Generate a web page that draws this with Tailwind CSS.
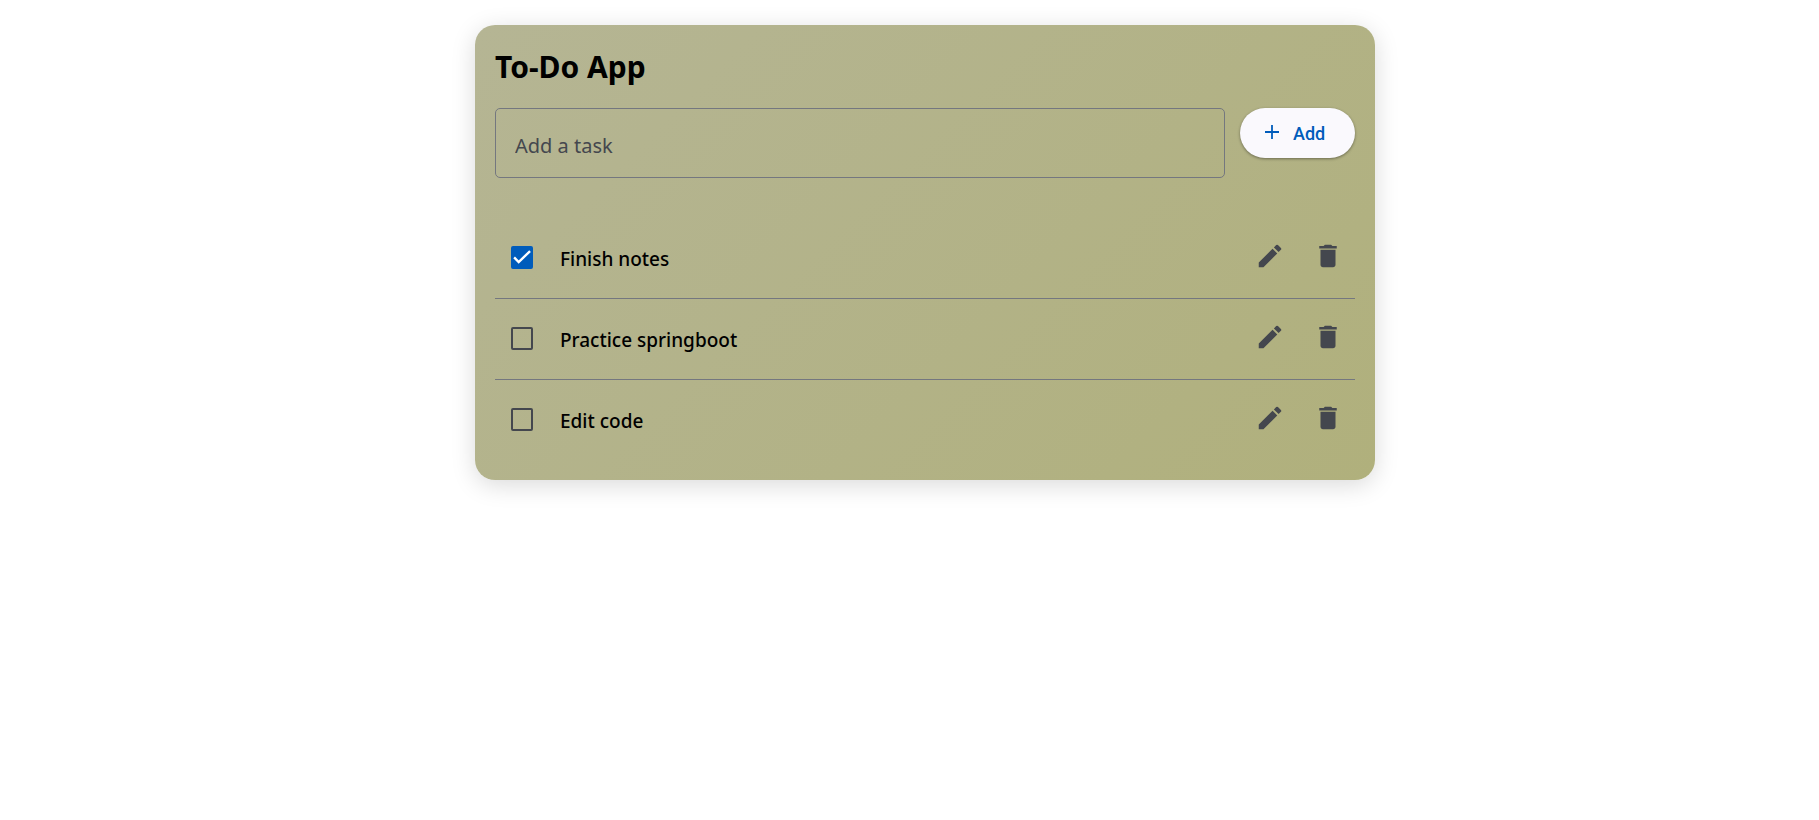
<!DOCTYPE html>
<html lang="en">
<head>
<meta charset="utf-8">
<title>To-Do App</title>
<script src="https://cdn.jsdelivr.net/npm/@tailwindcss/browser@4"></script>
</head>
<body class="min-h-screen bg-white pt-[25px] pl-[31px] font-[family-name:'Segoe_UI','Noto_Sans',sans-serif] text-black">
<main class="mx-auto max-w-[900px] rounded-[20px] bg-linear-135 from-[#b5b594] to-[#b0b07c] p-5 shadow-[0_5px_25px_rgba(0,0,0,0.15)]">
  <h1 class="mb-5 text-[30px]/[43px] font-bold">To-Do App</h1>
  <form class="mb-10 flex items-start gap-[15px]">
    <input type="text" aria-label="Add a task" placeholder="Add a task" class="h-[70px] min-w-0 flex-1 rounded-[5px] border border-[#74777f] bg-transparent px-[19px] pt-1 text-[20px] placeholder:text-[#44474e]">
    <button type="button" class="flex h-[50px] w-[115px] items-center gap-[10px] rounded-full bg-[#faf9fd] pl-[21px] font-[family-name:Roboto,sans-serif] text-[18px] font-medium text-[#005cbb] shadow-[0_1px_3px_rgba(0,0,0,0.4)]">
      <svg class="mb-[2px] size-[22px]" viewBox="0 0 22 22" fill="none" stroke="currentColor" stroke-width="1.8" aria-hidden="true"><path d="M11 4v14M4 11h14"/></svg>Add
    </button>
  </form>
  <ul>
    <li class="flex items-center border-b border-[#74777f] pr-3 pl-4">
      <span class="relative mr-[27px] mb-px h-[23px] w-[22px]">
        <input id="t1" type="checkbox" checked class="peer block h-[23px] w-[22px] appearance-none rounded-[2px] border-2 border-[#44474e] checked:border-[#005cbb] checked:bg-[#005cbb]">
        <svg class="pointer-events-none absolute inset-0 hidden size-[22px] peer-checked:block" viewBox="0 0 24 24" fill="none" stroke="#fff" stroke-width="2.6" aria-hidden="true"><path d="M3.400 12.500 8.400 17.600 20.800 5.500"/></svg>
      </span>
      <label for="t1" class="flex-1 pt-[2px] text-[19px]/[78px] font-medium">Finish notes</label>
      <button type="button" aria-label="Edit" class="mr-7 pb-[5px] text-[#44474e]"><svg class="size-[30px]" viewBox="0 0 24 24" fill="currentColor"><path d="M3 17.25V21h3.75L17.81 9.94l-3.75-3.75L3 17.25zM20.71 7.04a1 1 0 0 0 0-1.41l-2.34-2.34a1 1 0 0 0-1.41 0l-1.83 1.83 3.75 3.75 1.83-1.83z"/></svg></button>
      <button type="button" aria-label="Delete" class="pb-[5px] text-[#44474e]"><svg class="size-[30px]" viewBox="0 0 24 24" fill="currentColor"><path d="M6 19c0 1.100.9 2 2 2h8c1.100 0 2-.9 2-2V7H6v12zM19 4h-3.500l-1-1h-5l-1 1H5v2h14V4z"/></svg></button>
    </li>
    <li class="flex items-center border-b border-[#74777f] pr-3 pl-4">
      <span class="relative mr-[27px] mb-px h-[23px] w-[22px]">
        <input id="t2" type="checkbox" class="peer block h-[23px] w-[22px] appearance-none rounded-[2px] border-2 border-[#44474e] checked:border-[#005cbb] checked:bg-[#005cbb]">
        <svg class="pointer-events-none absolute inset-0 hidden size-[22px] peer-checked:block" viewBox="0 0 24 24" fill="none" stroke="#fff" stroke-width="2.6" aria-hidden="true"><path d="M3.400 12.500 8.400 17.600 20.800 5.500"/></svg>
      </span>
      <label for="t2" class="flex-1 pt-[2px] text-[19px]/[78px] font-medium">Practice springboot</label>
      <button type="button" aria-label="Edit" class="mr-7 pb-[5px] text-[#44474e]"><svg class="size-[30px]" viewBox="0 0 24 24" fill="currentColor"><path d="M3 17.25V21h3.75L17.81 9.94l-3.75-3.75L3 17.25zM20.71 7.04a1 1 0 0 0 0-1.41l-2.34-2.34a1 1 0 0 0-1.41 0l-1.83 1.83 3.75 3.75 1.83-1.83z"/></svg></button>
      <button type="button" aria-label="Delete" class="pb-[5px] text-[#44474e]"><svg class="size-[30px]" viewBox="0 0 24 24" fill="currentColor"><path d="M6 19c0 1.100.9 2 2 2h8c1.100 0 2-.9 2-2V7H6v12zM19 4h-3.500l-1-1h-5l-1 1H5v2h14V4z"/></svg></button>
    </li>
    <li class="flex items-center pr-3 pl-4">
      <span class="relative mr-[27px] mb-px h-[23px] w-[22px]">
        <input id="t3" type="checkbox" class="peer block h-[23px] w-[22px] appearance-none rounded-[2px] border-2 border-[#44474e] checked:border-[#005cbb] checked:bg-[#005cbb]">
        <svg class="pointer-events-none absolute inset-0 hidden size-[22px] peer-checked:block" viewBox="0 0 24 24" fill="none" stroke="#fff" stroke-width="2.6" aria-hidden="true"><path d="M3.400 12.500 8.400 17.600 20.800 5.500"/></svg>
      </span>
      <label for="t3" class="flex-1 pt-[2px] text-[19px]/[78px] font-medium">Edit code</label>
      <button type="button" aria-label="Edit" class="mr-7 pb-[5px] text-[#44474e]"><svg class="size-[30px]" viewBox="0 0 24 24" fill="currentColor"><path d="M3 17.25V21h3.75L17.81 9.94l-3.75-3.75L3 17.25zM20.71 7.04a1 1 0 0 0 0-1.41l-2.34-2.34a1 1 0 0 0-1.41 0l-1.83 1.83 3.75 3.75 1.83-1.83z"/></svg></button>
      <button type="button" aria-label="Delete" class="pb-[5px] text-[#44474e]"><svg class="size-[30px]" viewBox="0 0 24 24" fill="currentColor"><path d="M6 19c0 1.100.9 2 2 2h8c1.100 0 2-.9 2-2V7H6v12zM19 4h-3.500l-1-1h-5l-1 1H5v2h14V4z"/></svg></button>
    </li>
  </ul>
</main>
</body>
</html>
